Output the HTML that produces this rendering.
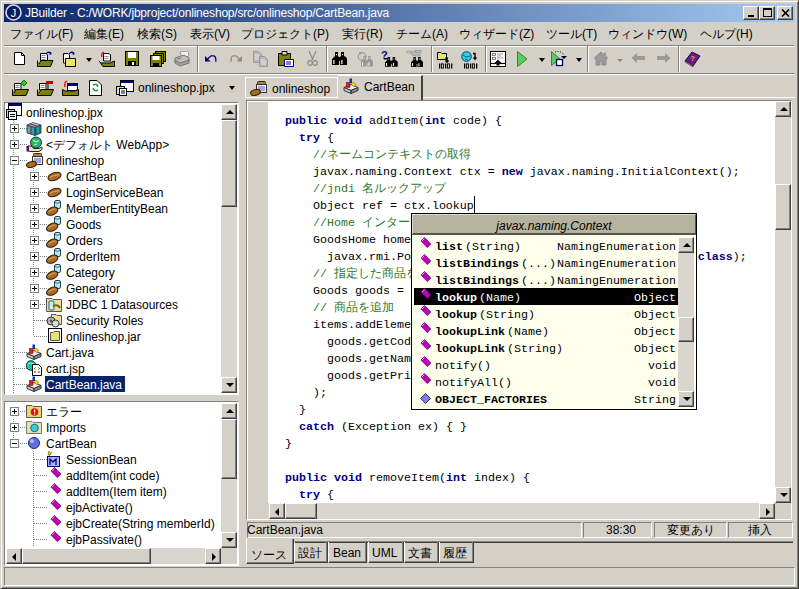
<!DOCTYPE html>
<html><head><meta charset="utf-8">
<style>
*{margin:0;padding:0;box-sizing:border-box}
html,body{width:799px;height:589px;overflow:hidden;background:#d4d0c8}
body{position:relative;font-family:"Liberation Sans",sans-serif;font-size:12px;color:#000}
.a{position:absolute}
.t{position:absolute;white-space:pre;line-height:16px;letter-spacing:0px}
.sunk{border-top:1px solid #808080;border-left:1px solid #808080;border-right:1px solid #fff;border-bottom:1px solid #fff}
.btn{position:absolute;background:#d4d0c8;border-top:1px solid #fff;border-left:1px solid #fff;border-right:1px solid #404040;border-bottom:1px solid #404040;box-shadow:inset -1px -1px 0 #808080}
.trk{position:absolute;background:#d9d6d0}
.code{position:absolute;font-family:"Liberation Mono",monospace;font-size:11.67px;line-height:17px;white-space:pre;color:#000}
.k{color:#000080;font-weight:bold}
.c{color:#2a7a2a}
.hsep{position:absolute;height:2px;border-top:1px solid #808080;border-bottom:1px solid #fff}
.vsep{position:absolute;width:2px;border-left:1px solid #808080;border-right:1px solid #fff}
.ic{position:absolute}
.ar{position:absolute;width:0;height:0;border-left:3px solid transparent;border-right:3px solid transparent}
.up{border-bottom:4px solid #000}
.dn{border-top:4px solid #000}
.box{position:absolute;width:9px;height:9px;border:1px solid #808080;background:#fff}
.box:before{content:"";position:absolute;left:1px;top:3px;width:5px;height:1px;background:#000}
.plus:after{content:"";position:absolute;left:3px;top:1px;width:1px;height:5px;background:#000}
.dv{position:absolute;width:1px;background-image:linear-gradient(#808080 50%,transparent 50%);background-size:1px 2px}
.dh{position:absolute;height:1px;background-image:linear-gradient(to right,#808080 50%,transparent 50%);background-size:2px 1px}
.j{display:inline-block;width:12px;text-align:center;font-family:"Liberation Sans",sans-serif;font-size:12px;font-weight:normal;line-height:12px}
</style></head><body>
<svg width="0" height="0" style="position:absolute"><defs>
<g id="bino"><path d="M3 0 H6 V4 L7 5 V13 H0 V7 L2 5 L3 4Z M9 0 H12 V4 L14 5 L15 7 V13 H8 V5 L9 4Z M6 5 H9 V9 H6Z" fill="currentColor"/><rect x="1.3" y="8" width="1.2" height="4" fill="#fff"/><rect x="9.3" y="8" width="1.2" height="4" fill="#fff"/><rect x="4" y="2" width="1" height="1.2" fill="#fff"/><rect x="10" y="2" width="1" height="1.2" fill="#fff"/></g>
</defs></svg>
<!-- window frame -->
<div class="a" style="left:0;top:0;width:799px;height:589px;border-top:1px solid #d4d0c8;border-left:1px solid #d4d0c8;border-right:1px solid #404040;border-bottom:1px solid #404040;box-shadow:inset 1px 1px 0 #fff,inset -1px -1px 0 #808080"></div>
<!-- title bar -->
<div class="a" style="left:4px;top:4px;width:791px;height:18px;background:linear-gradient(to right,#0a246a,#a6caf0)"></div>
<svg class="ic" style="left:5px;top:4px" width="17" height="17" viewBox="0 0 17 17"><circle cx="8.5" cy="8.5" r="7.5" fill="#0c1a5a" stroke="#d8dcec" stroke-width="1.6"/><text x="8.5" y="13" font-family="Liberation Sans" font-size="11" fill="#fff" text-anchor="middle">J</text></svg>
<div class="t" style="left:25px;top:5px;color:#fff;font-size:12px;letter-spacing:-0.19px">JBuilder - C:/WORK/jbproject/onlineshop/src/onlineshop/CartBean.java</div>
<div class="btn" style="left:743px;top:6px;width:16px;height:14px"><div class="a" style="left:4px;top:8px;width:6px;height:2px;background:#000"></div></div>
<div class="btn" style="left:759px;top:6px;width:16px;height:14px"><div class="a" style="left:3px;top:1px;width:9px;height:9px;border:1px solid #000;border-top-width:2px"></div></div>
<div class="btn" style="left:777px;top:6px;width:16px;height:14px"><svg class="ic" style="left:3px;top:2px" width="9" height="8"><path d="M1 0.5 L8 7.5 M8 0.5 L1 7.5" stroke="#000" stroke-width="1.6"/></svg></div>

<!-- menu -->
<div class="t" style="left:10px;top:26px"><span class="j">フ</span><span class="j">ァ</span><span class="j">イ</span><span class="j">ル</span>(F)</div>
<div class="t" style="left:84px;top:26px"><span class="j">編</span><span class="j">集</span>(E)</div>
<div class="t" style="left:137px;top:26px"><span class="j">検</span><span class="j">索</span>(S)</div>
<div class="t" style="left:190px;top:26px"><span class="j">表</span><span class="j">示</span>(V)</div>
<div class="t" style="left:241px;top:26px"><span class="j">プ</span><span class="j">ロ</span><span class="j">ジ</span><span class="j">ェ</span><span class="j">ク</span><span class="j">ト</span>(P)</div>
<div class="t" style="left:342px;top:26px"><span class="j">実</span><span class="j">行</span>(R)</div>
<div class="t" style="left:396px;top:26px"><span class="j">チ</span><span class="j">ー</span><span class="j">ム</span>(A)</div>
<div class="t" style="left:459px;top:26px"><span class="j">ウ</span><span class="j">ィ</span><span class="j">ザ</span><span class="j">ー</span><span class="j">ド</span>(Z)</div>
<div class="t" style="left:546px;top:26px"><span class="j">ツ</span><span class="j">ー</span><span class="j">ル</span>(T)</div>
<div class="t" style="left:608px;top:26px"><span class="j">ウ</span><span class="j">ィ</span><span class="j">ン</span><span class="j">ド</span><span class="j">ウ</span>(W)</div>
<div class="t" style="left:700px;top:26px"><span class="j">ヘ</span><span class="j">ル</span><span class="j">プ</span>(H)</div>

<div class="hsep" style="left:4px;top:45px;width:790px"></div>
<div class="hsep" style="left:4px;top:73px;width:790px"></div>

<!-- toolbar 1 -->
<svg class="ic" style="left:13px;top:52px" width="16" height="16"><path d="M1.5 0.5 H8.5 L11.5 3.5 V12.5 H1.5 Z" fill="#fff" stroke="#000"/><path d="M8.5 0.5 V3.5 H11.5" fill="none" stroke="#000"/></svg>
<svg class="ic" style="left:37px;top:51px" width="17" height="16"><path d="M3.5 2.5 H9 L10.5 4 V10 H3.5Z" fill="#fff" stroke="#000"/><path d="M4.5 4.5h4M4.5 6.5h4M4.5 8.5h4" stroke="#888"/><path d="M0.5 9.5 V15.5 H13.5 L16 9.5 H4 L2 13" fill="#808000" stroke="#000"/><path d="M9 3 Q11 0 14 2" fill="none" stroke="#00008b" stroke-width="1.3"/><path d="M13 1 L15 3 L12.5 4Z" fill="#00008b"/></svg>
<svg class="ic" style="left:62px;top:51px" width="16" height="16"><path d="M1.5 2.5 H6 L7.5 4 V12 H1.5Z" fill="#fff" stroke="#000"/><path d="M3.5 7.5 H13.5 V15.5 H3.5Z" fill="#e8e46c" stroke="#000"/><path d="M7 3 Q9 0 12 2" fill="none" stroke="#00008b" stroke-width="1.3"/><path d="M11 1 L13 3 L10.5 4Z" fill="#00008b"/></svg>
<div class="ar dn" style="left:86px;top:58px"></div>
<svg class="ic" style="left:99px;top:51px" width="16" height="16"><path d="M4.5 2.5 H10 L11.5 4 V10 H4.5Z" fill="#fff" stroke="#000"/><path d="M5.5 5.5h4M5.5 7.5h4" stroke="#888"/><path d="M0.5 10.5 L4 15.5 H15.5 V10 L11 12 H2Z" fill="#808000" stroke="#000"/><path d="M3 6 Q2 2 5 1" fill="none" stroke="#e00" stroke-width="1.3"/></svg>
<svg class="ic" style="left:125px;top:51px" width="15" height="16"><rect x="0.5" y="0.5" width="13" height="14" fill="#808000" stroke="#000"/><rect x="3" y="1" width="8" height="6" fill="#fff"/><rect x="3" y="10" width="8" height="5" fill="#000"/><rect x="7" y="11" width="2" height="3" fill="#fff"/></svg>
<svg class="ic" style="left:150px;top:51px" width="16" height="16"><rect x="5.5" y="0.5" width="10" height="10" fill="#808000" stroke="#000"/><rect x="3.5" y="2.5" width="10" height="10" fill="#808000" stroke="#000"/><rect x="0.5" y="4.5" width="11" height="11" fill="#808000" stroke="#000"/><rect x="2.5" y="5" width="7" height="4" fill="#fff"/><rect x="3" y="12" width="6" height="4" fill="#000"/></svg>
<svg class="ic" style="left:174px;top:51px" width="16" height="16"><path d="M6 1 L14 0 L15 5 L8 7Z" fill="#f4f4f4" stroke="#999"/><path d="M1 7 L10 4 L15 7 V11 L6 14 L1 11Z" fill="#c0c0c0" stroke="#777"/><path d="M1 9 L6 12 L15 9 V12 L6 15 L1 12Z" fill="#a0a0a0" stroke="#777"/><path d="M3 8 L7 7" stroke="#c44"/></svg>
<div class="vsep" style="left:197px;top:46px;height:26px"></div>
<svg class="ic" style="left:204px;top:51px" width="16" height="16"><path d="M1 5 V10.5 H6.5Z" fill="#000070"/><path d="M3.5 8 L7 4.8 H10 Q12.2 5.5 11.8 10.8" fill="none" stroke="#000070" stroke-width="1.3"/></svg>
<svg class="ic" style="left:228px;top:51px" width="16" height="16"><path d="M14 5 V10.5 H8.5Z" fill="#8a8a8a"/><path d="M11.5 8 L8 4.8 H5 Q2.8 5.5 3.2 10.8" fill="none" stroke="#8a8a8a" stroke-width="1.3"/></svg>
<svg class="ic" style="left:253px;top:51px" width="16" height="16"><path d="M0.5 0.5 H5.5 L8.5 3.5 V11.5 H0.5Z" fill="#b8b8b8" stroke="#9a9a9a"/><path d="M2 4h4M2 6h5M2 8h5" stroke="#e8e8e8"/><path d="M6.5 5.5 H11.5 L14.5 8.5 V15.5 H6.5Z" fill="#b8b8b8" stroke="#9a9a9a"/><path d="M8 9h4M8 11h5M8 13h5" stroke="#e8e8e8"/></svg>
<svg class="ic" style="left:278px;top:51px" width="16" height="17"><path d="M0.5 2.5 H12.5 V14.5 H0.5Z" fill="#808000" stroke="#000"/><path d="M4 0.5 H9 V4 H4Z" fill="#ddd" stroke="#000"/><path d="M6.5 8.5 H15.5 V15.5 H6.5Z" fill="#fff" stroke="#00008b"/><path d="M8 11h5M8 13h5" stroke="#00008b"/></svg>
<svg class="ic" style="left:307px;top:51px" width="11" height="16"><path d="M2 0 L6 9 M9 0 L5 9" stroke="#8c8c8c" stroke-width="1.2"/><circle cx="3" cy="12" r="2.3" fill="none" stroke="#8c8c8c" stroke-width="1.2"/><circle cx="8" cy="12" r="2.3" fill="none" stroke="#8c8c8c" stroke-width="1.2"/></svg>
<div class="vsep" style="left:326px;top:46px;height:26px"></div>
<svg class="ic" style="left:332px;top:52px;color:#000" width="16" height="14"><use href="#bino"/></svg>
<svg class="ic" style="left:356px;top:51px;color:#999" width="18" height="16"><circle cx="6" cy="5.5" r="3.8" fill="none" stroke="#999" stroke-width="1.2"/><path d="M3 1 L6 1.5 L4 4Z" fill="#999"/><g transform="translate(5 5) scale(0.8)"><use href="#bino"/></g></svg>
<svg class="ic" style="left:380px;top:50px;color:#000" width="19" height="17"><text x="1" y="9" font-family="Liberation Sans" font-weight="bold" font-size="11" fill="#000090">?</text><rect x="4" y="8" width="5" height="1.5" fill="#000"/><g transform="translate(5 7) scale(0.85 0.75)"><use href="#bino"/></g></svg>
<svg class="ic" style="left:406px;top:50px;color:#000" width="18" height="17"><rect x="1" y="1" width="4" height="2" fill="#d8d8a0" stroke="#888" stroke-width="0.6"/><rect x="9" y="0.5" width="6" height="2" fill="#a0d0d0" stroke="#888" stroke-width="0.6"/><rect x="8" y="4" width="6" height="2" fill="#a0d0d0" stroke="#888" stroke-width="0.6"/><path d="M5 2 H9 M6 2 V5 H8" stroke="#889" fill="none" stroke-width="0.8"/><g transform="translate(5 7) scale(0.8 0.77)"><use href="#bino"/></g></svg>
<div class="vsep" style="left:431px;top:46px;height:26px"></div>
<svg class="ic" style="left:436px;top:51px" width="18" height="18"><path d="M1.5 1.5 H5 L6 2.5 H10.5 V8.5 H1.5Z" fill="#e8e47c" stroke="#000"/><path d="M11 6 V11 M9.5 9.5 L11 11.2 L12.5 9.5" stroke="#000" stroke-width="1.4" fill="none"/><path d="M9 7 H11" stroke="#000"/><rect x="3.0" y="12.5" width="1.3" height="5" fill="#000"/><rect x="5.5" y="12.9" width="2" height="4.2" fill="none" stroke="#000" stroke-width="0.9"/><rect x="9.0" y="12.5" width="1.3" height="5" fill="#000"/><rect x="11.5" y="12.9" width="2" height="4.2" fill="none" stroke="#000" stroke-width="0.9"/><rect x="15.0" y="12.5" width="1.3" height="5" fill="#000"/></svg>
<svg class="ic" style="left:461px;top:51px" width="18" height="18"><circle cx="5.5" cy="5.5" r="4.8" fill="#30d0f0" stroke="#004060"/><path d="M2 4 L5 6 L9 5 M4 8 L7 9" stroke="#006080" fill="none"/><path d="M12 2.5 H14 V8 M12.5 6.5 L14 8.2 L15.5 6.5" stroke="#000" stroke-width="1.4" fill="none"/><rect x="3.0" y="12.5" width="1.3" height="5" fill="#000"/><rect x="5.5" y="12.9" width="2" height="4.2" fill="none" stroke="#000" stroke-width="0.9"/><rect x="9.0" y="12.5" width="1.3" height="5" fill="#000"/><rect x="11.5" y="12.9" width="2" height="4.2" fill="none" stroke="#000" stroke-width="0.9"/><rect x="15.0" y="12.5" width="1.3" height="5" fill="#000"/></svg>
<div class="vsep" style="left:485px;top:46px;height:26px"></div>
<svg class="ic" style="left:490px;top:51px" width="16" height="17"><rect x="0.5" y="0.5" width="15" height="15" fill="#fff" stroke="#000"/><rect x="2.5" y="2.5" width="3" height="2" fill="none" stroke="#666" stroke-width="0.8"/><rect x="2.5" y="6.5" width="3" height="2" fill="none" stroke="#666" stroke-width="0.8"/><path d="M7 3h6M7 7h6M7 5h4" stroke="#999"/><path d="M1 12.5 H15" stroke="#000" stroke-width="1.2"/><path d="M8 8.5 L11.5 12 H9.5 V14.5 H6.5 V12 H4.5Z" fill="#000"/></svg>
<svg class="ic" style="left:517px;top:51px" width="11" height="16"><path d="M0.5 0.5 L10 8 L0.5 15.5Z" fill="#5ccc5c" stroke="#2a8a2a"/></svg>
<div class="ar dn" style="left:539px;top:58px"></div>
<svg class="ic" style="left:551px;top:51px" width="17" height="16"><path d="M0.5 0.5 L9 8 L0.5 14.5Z" fill="#5ccc5c" stroke="#2a8a2a"/><path d="M4 1 Q10 -1 13 4" fill="none" stroke="#000" stroke-dasharray="1 1.5"/><path d="M10 5 H16 L13 8Z" fill="#000"/><rect x="5.5" y="8.5" width="6" height="6" fill="#fff" stroke="#00006a" stroke-width="1.3"/></svg>
<div class="ar dn" style="left:576px;top:58px"></div>
<div class="vsep" style="left:587px;top:46px;height:26px"></div>
<svg class="ic" style="left:594px;top:51px" width="14" height="15"><path d="M7 1 L0.5 7 H2 V14 H6 V10 H8 V14 H12 V7 H13.5Z" fill="#9a9a9a" stroke="#888"/><rect x="10" y="1.5" width="2" height="4" fill="#9a9a9a"/></svg>
<div class="ar" style="left:617px;top:59px;border-top:3px solid #888"></div>
<svg class="ic" style="left:631px;top:52px" width="15" height="12"><path d="M0.5 6 L6 1 V4 H14 V8 H6 V11Z" fill="#9a9a9a"/></svg>
<svg class="ic" style="left:656px;top:52px" width="15" height="12"><path d="M14.5 6 L9 1 V4 H1 V8 H9 V11Z" fill="#9a9a9a"/></svg>
<div class="vsep" style="left:678px;top:46px;height:26px"></div>
<svg class="ic" style="left:684px;top:51px" width="17" height="16"><path d="M1 10 L8 1 L16 5 L9 15Z" fill="#6a1a8a" stroke="#2a0040"/><path d="M1 10 L9 15 L9 16 L1 11Z" fill="#fff" stroke="#2a0040" stroke-width="0.6"/><text x="6.5" y="10" font-family="Liberation Sans" font-weight="bold" font-size="7" fill="#f0c000">?</text></svg>

<!-- toolbar 2 -->
<svg class="ic" style="left:12px;top:80px" width="17" height="16"><path d="M2.5 3.5 H9 V10 H2.5Z" fill="#fff" stroke="#000"/><path d="M3.5 5.5h4M3.5 7.5h4" stroke="#888"/><path d="M0.5 9.5 V15.5 H14 L16.5 9.5 H4 L2 13" fill="#808000" stroke="#000"/><path d="M12 0 L15 3 L12 6 L9 3Z" fill="#20d020" stroke="#080"/></svg>
<svg class="ic" style="left:37px;top:80px" width="17" height="16"><path d="M2.5 3.5 H9 V10 H2.5Z" fill="#fff" stroke="#000"/><path d="M3.5 5.5h4M3.5 7.5h4" stroke="#888"/><path d="M0.5 9.5 V15.5 H14 L16.5 9.5 H4 L2 13" fill="#808000" stroke="#000"/><rect x="9" y="1" width="7" height="3" fill="#c00000"/><path d="M11 4 V9" stroke="#000"/></svg>
<svg class="ic" style="left:62px;top:80px" width="17" height="16"><rect x="5.5" y="3.5" width="10" height="7" fill="#fff" stroke="#000"/><rect x="6" y="4" width="9" height="2" fill="#00008b"/><path d="M0.5 9.5 V15.5 H16.5 V9.5 L12 11 H3Z" fill="#808000" stroke="#000"/><path d="M3 7 Q2 2 5 1" fill="none" stroke="#e00" stroke-width="1.3"/></svg>
<svg class="ic" style="left:89px;top:80px" width="13" height="16"><path d="M0.5 0.5 H8 L12.5 5 V15.5 H0.5Z" fill="#fff" stroke="#000"/><path d="M4 5 Q8 3 9 7 M9 10 Q5 12 4 8" fill="none" stroke="#1a9a1a" stroke-width="1.4"/></svg>
<svg class="ic" style="left:116px;top:80px" width="18" height="16"><rect x="4.5" y="0.5" width="13" height="11" fill="#fff" stroke="#000"/><rect x="5" y="1" width="12" height="2" fill="#00008b"/><rect x="0.5" y="6.5" width="8" height="8" fill="#d8d8c8" stroke="#000"/><rect x="3.5" y="8.5" width="7" height="7" fill="#fff" stroke="#000"/><path d="M5 11h4M5 13h4" stroke="#000"/></svg>
<div class="t" style="left:138px;top:80px">onlineshop.jpx</div>
<div class="ar dn" style="left:229px;top:86px"></div>
<!-- file tabs -->
<div class="a" style="left:245px;top:77px;width:93px;height:21px;border-top:1px solid #fff;border-left:1px solid #fff;border-right:1px solid #fff;border-bottom:1px solid #fff"></div>
<div class="a" style="left:422px;top:97px;width:373px;height:1px;background:#fff"></div>
<svg class="ic" style="left:250px;top:80px" width="17" height="16"><rect x="7.5" y="1.5" width="8" height="3" rx="1" fill="#b08040" stroke="#3a2a10"/><rect x="6.5" y="4.5" width="10" height="8" fill="#f0f0f0" stroke="#333"/><rect x="8" y="6" width="7" height="5" fill="#a8a8d8"/><ellipse cx="5.5" cy="12.5" rx="5" ry="2.8" transform="rotate(-15 5.5 12.5)" fill="#a86a28" stroke="#3a2000"/></svg>
<div class="t" style="left:272px;top:81px">onlineshop</div>
<div class="a" style="left:338px;top:75px;width:85px;height:25px;background:#d4d0c8;border-top:1px solid #fff;border-right:2px solid #404040"></div>
<svg class="ic" style="left:343px;top:78px" width="17" height="16"><path d="M1 9.5 L8 6.5 L15 9.5 L8 12.5Z" fill="#f4f4f4" stroke="#222" stroke-width="0.9"/><path d="M1 9.5 L8 12.5 V15.5 L1 12.5Z" fill="#c8c8c8" stroke="#222" stroke-width="0.9"/><path d="M8 12.5 L15 9.5 V12.5 L8 15.5Z" fill="#909090" stroke="#222" stroke-width="0.9"/><rect x="3.5" y="4.5" width="3.5" height="5" fill="#e01818" stroke="#600" stroke-width="0.5"/><rect x="6.5" y="0.5" width="2.5" height="4.5" fill="#1030b0"/><path d="M8 6 L10.5 4 L13 6.5 L10.5 8.5Z" fill="#f0d800" stroke="#806000" stroke-width="0.5"/></svg>
<div class="t" style="left:364px;top:79px">CartBean</div>

<!-- left tree panel -->
<div class="a sunk" style="left:4px;top:102px;width:235px;height:293px;background:#fff"></div>
<!-- tree scrollbar -->
<div class="trk" style="left:221px;top:104px;width:16px;height:289px"></div>
<div class="btn" style="left:221px;top:104px;width:16px;height:16px"><div class="ar up" style="left:4px;top:5px;border-left-width:4px;border-right-width:4px"></div></div>
<div class="btn" style="left:221px;top:120px;width:16px;height:87px"></div>
<div class="btn" style="left:221px;top:377px;width:16px;height:16px"><div class="ar dn" style="left:4px;top:5px;border-left-width:4px;border-right-width:4px"></div></div>

<!-- tree lines -->
<div class="dv" style="left:13px;top:120px;height:273px"></div>
<div class="dv" style="left:33px;top:168px;height:168px"></div>
<div class="dh" style="left:20px;top:128px;width:8px"></div>
<div class="dh" style="left:20px;top:144px;width:8px"></div>
<div class="dh" style="left:20px;top:160px;width:8px"></div>
<div class="dh" style="left:14px;top:352px;width:13px"></div>
<div class="dh" style="left:14px;top:368px;width:13px"></div>
<div class="dh" style="left:14px;top:384px;width:13px"></div>
<div class="dh" style="left:40px;top:176px;width:8px"></div>
<div class="dh" style="left:40px;top:192px;width:8px"></div>
<div class="dh" style="left:40px;top:208px;width:8px"></div>
<div class="dh" style="left:40px;top:224px;width:8px"></div>
<div class="dh" style="left:40px;top:240px;width:8px"></div>
<div class="dh" style="left:40px;top:256px;width:8px"></div>
<div class="dh" style="left:40px;top:272px;width:8px"></div>
<div class="dh" style="left:40px;top:288px;width:8px"></div>
<div class="dh" style="left:40px;top:304px;width:8px"></div>
<div class="dh" style="left:34px;top:320px;width:13px"></div>
<div class="dh" style="left:34px;top:336px;width:13px"></div>
<div class="box plus" style="left:10px;top:124px"></div>
<div class="box plus" style="left:10px;top:140px"></div>
<div class="box" style="left:10px;top:156px"></div>
<div class="box plus" style="left:30px;top:172px"></div>
<div class="box plus" style="left:30px;top:188px"></div>
<div class="box plus" style="left:30px;top:204px"></div>
<div class="box plus" style="left:30px;top:220px"></div>
<div class="box plus" style="left:30px;top:236px"></div>
<div class="box plus" style="left:30px;top:252px"></div>
<div class="box plus" style="left:30px;top:268px"></div>
<div class="box plus" style="left:30px;top:284px"></div>
<div class="box plus" style="left:30px;top:300px"></div>

<!-- tree icons -->
<svg class="ic" style="left:6px;top:103px" width="17" height="17"><rect x="2.5" y="0.5" width="13" height="12" fill="#fff" stroke="#000"/><rect x="3" y="1" width="12" height="2" fill="#000080"/><rect x="0.5" y="6.5" width="8" height="8" fill="#c8c8c0" stroke="#000"/><rect x="2.5" y="8.5" width="8" height="8" fill="#fff" stroke="#000"/><path d="M4 11.5h5M4 13.5h5" stroke="#000"/></svg>
<svg class="ic" style="left:26px;top:121px" width="17" height="16"><path d="M1 4 L7 1.5 L15 4 L9 6.5Z" fill="#a8e8f0" stroke="#104050" stroke-width="0.8"/><path d="M1 4 L9 6.5 V14.5 L1 12Z" fill="#30a0b0" stroke="#104050" stroke-width="0.8"/><path d="M9 6.5 L15 4 V12 L9 14.5Z" fill="#207080" stroke="#104050" stroke-width="0.8"/><path d="M4 2.8 L12 5.3 M5 5 V13" stroke="#c02020" stroke-width="1.3"/><path d="M3 6 V12 M12 6 V12" stroke="#60d0e0" stroke-width="0.8"/></svg>
<svg class="ic" style="left:26px;top:136px" width="17" height="16"><circle cx="10" cy="6.5" r="5.5" fill="#30b070" stroke="#0a3a30"/><path d="M7 4 L10 6 L13 4.5 M8 9 L11 8" stroke="#a0f0c0" fill="none" stroke-width="1.2"/><path d="M2 10 H5 L8 12.5 H13 L16 11 V13.5 L13 15.5 H4 L2 14.5Z" fill="#e8e0b0" stroke="#2a2a20"/><rect x="0.5" y="10" width="2.5" height="5.5" fill="#600080"/></svg>
<svg class="ic" style="left:26px;top:152px" width="17" height="16"><rect x="7.5" y="1.5" width="8" height="3" rx="1" fill="#b08040" stroke="#3a2a10"/><rect x="6.5" y="4.5" width="10" height="8" fill="#f0f0f0" stroke="#333"/><rect x="8" y="6" width="7" height="5" fill="#a8a8d8"/><ellipse cx="5.5" cy="12.5" rx="5" ry="2.8" transform="rotate(-15 5.5 12.5)" fill="#a86a28" stroke="#3a2000"/></svg>
<svg class="ic" style="left:47px;top:168px" width="16" height="16"><ellipse cx="7.5" cy="8.5" rx="6.8" ry="3.8" transform="rotate(-20 7.5 8.5)" fill="#a86a28" stroke="#3a2000"/><path d="M3 9.5 Q7 6.5 12 7" stroke="#e0b070" fill="none"/></svg>
<svg class="ic" style="left:47px;top:184px" width="16" height="16"><ellipse cx="7.5" cy="8.5" rx="6.8" ry="3.8" transform="rotate(-20 7.5 8.5)" fill="#a86a28" stroke="#3a2000"/><path d="M3 9.5 Q7 6.5 12 7" stroke="#e0b070" fill="none"/></svg>
<svg class="ic" style="left:46px;top:200px" width="17" height="16"><rect x="8.5" y="0.5" width="6" height="8" rx="1.5" fill="#b8eaf4" stroke="#204858"/><path d="M8.5 2.5 Q11.5 4 14.5 2.5" stroke="#204858" fill="none" stroke-width="0.8"/><ellipse cx="6.2" cy="11.2" rx="6" ry="3.6" transform="rotate(-25 6.2 11.2)" fill="#a86a28" stroke="#3a2000"/><path d="M2.5 12 Q6 9 9.5 9" stroke="#e0b070" fill="none"/></svg>
<svg class="ic" style="left:46px;top:216px" width="17" height="16"><rect x="8.5" y="0.5" width="6" height="8" rx="1.5" fill="#b8eaf4" stroke="#204858"/><path d="M8.5 2.5 Q11.5 4 14.5 2.5" stroke="#204858" fill="none" stroke-width="0.8"/><ellipse cx="6.2" cy="11.2" rx="6" ry="3.6" transform="rotate(-25 6.2 11.2)" fill="#a86a28" stroke="#3a2000"/><path d="M2.5 12 Q6 9 9.5 9" stroke="#e0b070" fill="none"/></svg>
<svg class="ic" style="left:46px;top:232px" width="17" height="16"><rect x="8.5" y="0.5" width="6" height="8" rx="1.5" fill="#b8eaf4" stroke="#204858"/><path d="M8.5 2.5 Q11.5 4 14.5 2.5" stroke="#204858" fill="none" stroke-width="0.8"/><ellipse cx="6.2" cy="11.2" rx="6" ry="3.6" transform="rotate(-25 6.2 11.2)" fill="#a86a28" stroke="#3a2000"/><path d="M2.5 12 Q6 9 9.5 9" stroke="#e0b070" fill="none"/></svg>
<svg class="ic" style="left:46px;top:248px" width="17" height="16"><rect x="8.5" y="0.5" width="6" height="8" rx="1.5" fill="#b8eaf4" stroke="#204858"/><path d="M8.5 2.5 Q11.5 4 14.5 2.5" stroke="#204858" fill="none" stroke-width="0.8"/><ellipse cx="6.2" cy="11.2" rx="6" ry="3.6" transform="rotate(-25 6.2 11.2)" fill="#a86a28" stroke="#3a2000"/><path d="M2.5 12 Q6 9 9.5 9" stroke="#e0b070" fill="none"/></svg>
<svg class="ic" style="left:46px;top:264px" width="17" height="16"><rect x="8.5" y="0.5" width="6" height="8" rx="1.5" fill="#b8eaf4" stroke="#204858"/><path d="M8.5 2.5 Q11.5 4 14.5 2.5" stroke="#204858" fill="none" stroke-width="0.8"/><ellipse cx="6.2" cy="11.2" rx="6" ry="3.6" transform="rotate(-25 6.2 11.2)" fill="#a86a28" stroke="#3a2000"/><path d="M2.5 12 Q6 9 9.5 9" stroke="#e0b070" fill="none"/></svg>
<svg class="ic" style="left:46px;top:280px" width="17" height="16"><rect x="8.5" y="0.5" width="6" height="8" rx="1.5" fill="#b8eaf4" stroke="#204858"/><path d="M8.5 2.5 Q11.5 4 14.5 2.5" stroke="#204858" fill="none" stroke-width="0.8"/><ellipse cx="6.2" cy="11.2" rx="6" ry="3.6" transform="rotate(-25 6.2 11.2)" fill="#a86a28" stroke="#3a2000"/><path d="M2.5 12 Q6 9 9.5 9" stroke="#e0b070" fill="none"/></svg>
<svg class="ic" style="left:46px;top:296px" width="17" height="16"><path d="M0.5 2.5 H6 L7 3.5 H15.5 V15.5 H0.5Z" fill="#e8e0a0" stroke="#555"/><rect x="3" y="5" width="5" height="9" rx="1" fill="#c8f0f8" stroke="#306070"/><path d="M7 10 Q12 8 14 12" stroke="#806000" stroke-width="2" fill="none"/></svg>
<svg class="ic" style="left:46px;top:312px" width="17" height="16"><path d="M5.5 2.5 H10 L11 3.5 H15.5 V12.5 H5.5Z" fill="#e8e0a0" stroke="#555"/><circle cx="5" cy="9" r="4" fill="#bbb" stroke="#333"/><circle cx="9.5" cy="11.5" r="3.5" fill="#ddd" stroke="#333"/><circle cx="5" cy="9" r="1.4" fill="#555"/></svg>
<svg class="ic" style="left:46px;top:312px" width="0" height="0"></svg>
<svg class="ic" style="left:48px;top:328px" width="15" height="16"><rect x="0.5" y="0.5" width="13" height="14" fill="#fff" stroke="#000"/><path d="M2.5 4.5 H5 L6 3.5 H11.5 V12.5 H2.5Z" fill="#e8e070" stroke="#555"/></svg>
<svg class="ic" style="left:26px;top:344px" width="17" height="16"><path d="M1 9.5 L8 6.5 L15 9.5 L8 12.5Z" fill="#f4f4f4" stroke="#222" stroke-width="0.9"/><path d="M1 9.5 L8 12.5 V15.5 L1 12.5Z" fill="#c8c8c8" stroke="#222" stroke-width="0.9"/><path d="M8 12.5 L15 9.5 V12.5 L8 15.5Z" fill="#909090" stroke="#222" stroke-width="0.9"/><rect x="3.5" y="4.5" width="3.5" height="5" fill="#e01818" stroke="#600" stroke-width="0.5"/><rect x="6.5" y="0.5" width="2.5" height="4.5" fill="#1030b0"/><path d="M8 6 L10.5 4 L13 6.5 L10.5 8.5Z" fill="#f0d800" stroke="#806000" stroke-width="0.5"/></svg>
<svg class="ic" style="left:26px;top:360px" width="17" height="16"><circle cx="5" cy="5.5" r="4.8" fill="#20c0a0" stroke="#0a3a40"/><path d="M2 4 Q5 2 8 4" stroke="#a0f0e0" fill="none"/><path d="M6.5 4.5 H12.5 L15.5 7.5 V15.5 H6.5Z" fill="#fff" stroke="#000"/><path d="M9.5 7.5 L8.5 8.5 L9.5 9.5 M12.5 7.5 L13.5 8.5 L12.5 9.5 M9.5 11 L8.5 12 L9.5 13 M12.5 11 L13.5 12 L12.5 13" stroke="#000" fill="none" stroke-width="0.8"/></svg>
<svg class="ic" style="left:26px;top:376px" width="17" height="16"><path d="M1 9.5 L8 6.5 L15 9.5 L8 12.5Z" fill="#f4f4f4" stroke="#222" stroke-width="0.9"/><path d="M1 9.5 L8 12.5 V15.5 L1 12.5Z" fill="#c8c8c8" stroke="#222" stroke-width="0.9"/><path d="M8 12.5 L15 9.5 V12.5 L8 15.5Z" fill="#909090" stroke="#222" stroke-width="0.9"/><rect x="3.5" y="4.5" width="3.5" height="5" fill="#e01818" stroke="#600" stroke-width="0.5"/><rect x="6.5" y="0.5" width="2.5" height="4.5" fill="#1030b0"/><path d="M8 6 L10.5 4 L13 6.5 L10.5 8.5Z" fill="#f0d800" stroke="#806000" stroke-width="0.5"/></svg>

<!-- tree texts -->
<div class="t" style="left:26px;top:105px">onlineshop.jpx</div>
<div class="t" style="left:46px;top:121px">onlineshop</div>
<div class="t" style="left:46px;top:137px">&lt;<span class="j">デ</span><span class="j">フ</span><span class="j">ォ</span><span class="j">ル</span><span class="j">ト</span> WebApp&gt;</div>
<div class="t" style="left:46px;top:153px">onlineshop</div>
<div class="t" style="left:66px;top:169px">CartBean</div>
<div class="t" style="left:66px;top:185px">LoginServiceBean</div>
<div class="t" style="left:66px;top:201px">MemberEntityBean</div>
<div class="t" style="left:66px;top:217px">Goods</div>
<div class="t" style="left:66px;top:233px">Orders</div>
<div class="t" style="left:66px;top:249px">OrderItem</div>
<div class="t" style="left:66px;top:265px">Category</div>
<div class="t" style="left:66px;top:281px">Generator</div>
<div class="t" style="left:66px;top:297px">JDBC 1 Datasources</div>
<div class="t" style="left:66px;top:313px">Security Roles</div>
<div class="t" style="left:66px;top:329px">onlineshop.jar</div>
<div class="t" style="left:46px;top:345px">Cart.java</div>
<div class="t" style="left:46px;top:361px">cart.jsp</div>
<div class="a" style="left:45px;top:376px;width:80px;height:16px;background:#0a246a"></div>
<div class="t" style="left:46px;top:377px;color:#fff">CartBean.java</div>
<!-- structure panel -->
<div class="a sunk" style="left:4px;top:401px;width:235px;height:165px;background:#fff"></div>
<div class="trk" style="left:221px;top:403px;width:16px;height:145px"></div>
<div class="btn" style="left:221px;top:403px;width:16px;height:16px"><div class="ar up" style="left:4px;top:5px;border-left-width:4px;border-right-width:4px"></div></div>
<div class="btn" style="left:221px;top:419px;width:16px;height:60px"></div>
<div class="btn" style="left:221px;top:532px;width:16px;height:16px"><div class="ar dn" style="left:4px;top:5px;border-left-width:4px;border-right-width:4px"></div></div>
<div class="trk" style="left:6px;top:548px;width:215px;height:16px"></div>
<div class="a" style="left:221px;top:548px;width:16px;height:16px;background:#d4d0c8"></div>
<div class="btn" style="left:6px;top:548px;width:16px;height:16px"><div class="ar" style="left:5px;top:4px;border-top:4px solid transparent;border-bottom:4px solid transparent;border-right:4px solid #000;border-left:0"></div></div>
<div class="btn" style="left:22px;top:548px;width:129px;height:16px"></div>
<div class="btn" style="left:205px;top:548px;width:16px;height:16px"><div class="ar" style="left:6px;top:4px;border-top:4px solid transparent;border-bottom:4px solid transparent;border-left:4px solid #000;border-right:0"></div></div>

<div class="dv" style="left:13px;top:419px;height:20px"></div>
<div class="dv" style="left:33px;top:451px;height:95px"></div>
<div class="dh" style="left:20px;top:411px;width:8px"></div>
<div class="dh" style="left:20px;top:427px;width:8px"></div>
<div class="dh" style="left:20px;top:443px;width:8px"></div>
<div class="dh" style="left:34px;top:459px;width:13px"></div>
<div class="dh" style="left:34px;top:475px;width:14px"></div>
<div class="dh" style="left:34px;top:491px;width:14px"></div>
<div class="dh" style="left:34px;top:507px;width:14px"></div>
<div class="dh" style="left:34px;top:523px;width:14px"></div>
<div class="dh" style="left:34px;top:539px;width:14px"></div>
<div class="box plus" style="left:10px;top:407px"></div>
<div class="box plus" style="left:10px;top:423px"></div>
<div class="box" style="left:10px;top:439px"></div>
<svg class="ic" style="left:26px;top:403px" width="17" height="16"><path d="M0.5 2.5 H6 L7 3.5 H15.5 V14.5 H0.5Z" fill="#e8d870" stroke="#555"/><circle cx="8.5" cy="9" r="3.8" fill="#e01010"/><rect x="8" y="6.5" width="1.2" height="3" fill="#fff"/><rect x="8" y="10.5" width="1.2" height="1.2" fill="#fff"/></svg>
<svg class="ic" style="left:26px;top:419px" width="17" height="16"><path d="M0.5 2.5 H6 L7 3.5 H15.5 V14.5 H0.5Z" fill="#e8e0a8" stroke="#777"/><circle cx="8.5" cy="9" r="3.8" fill="#40c8d8" stroke="#207080"/></svg>
<svg class="ic" style="left:27px;top:436px" width="14" height="14"><circle cx="7" cy="7" r="5.5" fill="#6070e0" stroke="#202880"/><circle cx="5" cy="5" r="2" fill="#b0b8ff"/></svg>
<svg class="ic" style="left:47px;top:451px" width="16" height="16"><rect x="0.5" y="5.5" width="12" height="10" fill="#a8b8f0" stroke="#000080"/><path d="M3 14 V8 L6 11 L9 8 V14" stroke="#000080" fill="none" stroke-width="1.3"/><path d="M2 0 L4 3 L1 4Z M5 1 L2 5" fill="#f0d000" stroke="#b09000"/></svg>
<svg class="ic" style="left:49px;top:466px" width="13" height="13"><path d="M5.5 1.5 L11.8 8 L8.3 11.6 L2 5.1Z" fill="#c000c0" stroke="#700070" stroke-width="0.8"/><path d="M3 5 L5.5 2.5" stroke="#f0a0f0"/></svg>
<svg class="ic" style="left:49px;top:482px" width="13" height="13"><path d="M5.5 1.5 L11.8 8 L8.3 11.6 L2 5.1Z" fill="#c000c0" stroke="#700070" stroke-width="0.8"/><path d="M3 5 L5.5 2.5" stroke="#f0a0f0"/></svg>
<svg class="ic" style="left:49px;top:498px" width="13" height="13"><path d="M5.5 1.5 L11.8 8 L8.3 11.6 L2 5.1Z" fill="#c000c0" stroke="#700070" stroke-width="0.8"/><path d="M3 5 L5.5 2.5" stroke="#f0a0f0"/></svg>
<svg class="ic" style="left:49px;top:514px" width="13" height="13"><path d="M5.5 1.5 L11.8 8 L8.3 11.6 L2 5.1Z" fill="#c000c0" stroke="#700070" stroke-width="0.8"/><path d="M3 5 L5.5 2.5" stroke="#f0a0f0"/></svg>
<svg class="ic" style="left:49px;top:530px" width="13" height="13"><path d="M5.5 1.5 L11.8 8 L8.3 11.6 L2 5.1Z" fill="#c000c0" stroke="#700070" stroke-width="0.8"/><path d="M3 5 L5.5 2.5" stroke="#f0a0f0"/></svg>
<div class="t" style="left:46px;top:404px"><span class="j">エ</span><span class="j">ラ</span><span class="j">ー</span></div>
<div class="t" style="left:46px;top:420px">Imports</div>
<div class="t" style="left:46px;top:436px">CartBean</div>
<div class="t" style="left:66px;top:452px">SessionBean</div>
<div class="t" style="left:66px;top:468px">addItem(int code)</div>
<div class="t" style="left:66px;top:484px">addItem(Item item)</div>
<div class="t" style="left:66px;top:500px">ejbActivate()</div>
<div class="t" style="left:66px;top:516px">ejbCreate(String memberId)</div>
<div class="t" style="left:66px;top:532px">ejbPassivate()</div>

<!-- editor -->
<div class="a" style="left:246px;top:100px;width:546px;height:420px;border-top:1px solid #808080;border-left:1px solid #808080;border-right:1px solid #fff;border-bottom:1px solid #fff"></div>
<div class="a" style="left:247px;top:101px;width:544px;height:418px;background:#fff"></div>
<div class="a" style="left:248px;top:102px;width:20px;height:417px;background:#d4d0c8"></div>
<div class="code" style="left:271px;top:113px">  <span class="k">public</span> <span class="k">void</span> addItem(<span class="k">int</span> code) {
    <span class="k">try</span> {
      <span class="c">//<span class="j">ネ</span><span class="j">ー</span><span class="j">ム</span><span class="j">コ</span><span class="j">ン</span><span class="j">テ</span><span class="j">キ</span><span class="j">ス</span><span class="j">ト</span><span class="j">の</span><span class="j">取</span><span class="j">得</span></span>
      javax.naming.Context ctx = <span class="k">new</span> javax.naming.InitialContext();
      <span class="c">//jndi <span class="j">名</span><span class="j">ル</span><span class="j">ッ</span><span class="j">ク</span><span class="j">ア</span><span class="j">ッ</span><span class="j">プ</span></span>
      Object ref = ctx.lookup
      <span class="c">//Home <span class="j">イ</span><span class="j">ン</span><span class="j">タ</span><span class="j">ー</span><span class="j">フ</span><span class="j">ェ</span><span class="j">ー</span><span class="j">ス</span><span class="j">の</span><span class="j">取</span><span class="j">得</span></span>
      GoodsHome home = (GoodsHome)
        javax.rmi.PortableRemoteObject.narrow(ref, GoodsHome.<span class="k">class</span>);
      <span class="c">// <span class="j">指</span><span class="j">定</span><span class="j">し</span><span class="j">た</span><span class="j">商</span><span class="j">品</span><span class="j">を</span><span class="j">取</span><span class="j">得</span></span>
      Goods goods = home.findByPrimaryKey(code);
      <span class="c">// <span class="j">商</span><span class="j">品</span><span class="j">を</span><span class="j">追</span><span class="j">加</span></span>
      items.addElement(new Item(
        goods.getCode(),
        goods.getName(),
        goods.getPrice()
      );
    }
    <span class="k">catch</span> (Exception ex) { }
  }

  <span class="k">public</span> <span class="k">void</span> removeItem(<span class="k">int</span> index) {
    <span class="k">try</span> {</div>
<div class="a" style="left:474px;top:196px;width:1px;height:17px;background:#000"></div>
<!-- editor scrollbars -->
<div class="trk" style="left:775px;top:101px;width:16px;height:402px"></div>
<div class="btn" style="left:775px;top:101px;width:16px;height:16px"><div class="ar up" style="left:4px;top:5px;border-left-width:4px;border-right-width:4px"></div></div>
<div class="btn" style="left:775px;top:184px;width:16px;height:46px"></div>
<div class="btn" style="left:775px;top:487px;width:16px;height:16px"><div class="ar dn" style="left:4px;top:5px;border-left-width:4px;border-right-width:4px"></div></div>
<div class="a" style="left:248px;top:503px;width:543px;height:16px;background:#d4d0c8"></div>
<div class="trk" style="left:269px;top:503px;width:506px;height:16px"></div>
<div class="btn" style="left:269px;top:503px;width:16px;height:16px"><div class="ar" style="left:5px;top:4px;border-top:4px solid transparent;border-bottom:4px solid transparent;border-right:4px solid #000;border-left:0"></div></div>
<div class="btn" style="left:285px;top:503px;width:32px;height:16px"></div>
<div class="btn" style="left:759px;top:503px;width:16px;height:16px"><div class="ar" style="left:6px;top:4px;border-top:4px solid transparent;border-bottom:4px solid transparent;border-left:4px solid #000;border-right:0"></div></div>

<!-- popup -->
<div class="a" style="left:411px;top:213px;width:286px;height:197px;border:1px solid #000;background:#ffffee"></div>
<div class="a" style="left:412px;top:214px;width:284px;height:21px;background:#b5b39d;border-top:1px solid #e0dfd0;border-left:1px solid #e0dfd0;border-bottom:2px solid #55554a;border-right:1px solid #55554a"></div>
<div class="t" style="left:412px;top:218px;width:284px;text-align:center;font-style:italic;color:#000;font-size:12px">javax.naming.Context</div>
<div class="a" style="left:414px;top:288px;width:264px;height:17px;background:#000"></div>
<div class="trk" style="left:678px;top:237px;width:16px;height:170px"></div>
<div class="btn" style="left:678px;top:237px;width:16px;height:16px"><div class="ar up" style="left:4px;top:5px;border-left-width:4px;border-right-width:4px"></div></div>
<div class="btn" style="left:678px;top:317px;width:16px;height:25px"></div>
<div class="btn" style="left:678px;top:391px;width:16px;height:16px"><div class="ar dn" style="left:4px;top:5px;border-left-width:4px;border-right-width:4px"></div></div>
<svg class="ic" style="left:419px;top:236px" width="13" height="13"><path d="M5.5 1.5 L11.8 8 L8.3 11.6 L2 5.1Z" fill="#c000c0" stroke="#700070" stroke-width="0.8"/><path d="M3 5 L5.5 2.5" stroke="#f0a0f0"/></svg>
<div class="code" style="left:435px;top:239px;color:#000"><b>list</b><span style="margin-left:2px">(String)</span></div>
<div class="code" style="left:476px;width:200px;text-align:right;top:239px;color:#000">NamingEnumeration</div>
<svg class="ic" style="left:419px;top:253px" width="13" height="13"><path d="M5.5 1.5 L11.8 8 L8.3 11.6 L2 5.1Z" fill="#c000c0" stroke="#700070" stroke-width="0.8"/><path d="M3 5 L5.5 2.5" stroke="#f0a0f0"/></svg>
<div class="code" style="left:435px;top:256px;color:#000"><b>listBindings</b><span style="margin-left:2px">(...)</span></div>
<div class="code" style="left:476px;width:200px;text-align:right;top:256px;color:#000">NamingEnumeration</div>
<svg class="ic" style="left:419px;top:270px" width="13" height="13"><path d="M5.5 1.5 L11.8 8 L8.3 11.6 L2 5.1Z" fill="#c000c0" stroke="#700070" stroke-width="0.8"/><path d="M3 5 L5.5 2.5" stroke="#f0a0f0"/></svg>
<div class="code" style="left:435px;top:273px;color:#000"><b>listBindings</b><span style="margin-left:2px">(...)</span></div>
<div class="code" style="left:476px;width:200px;text-align:right;top:273px;color:#000">NamingEnumeration</div>
<svg class="ic" style="left:419px;top:287px" width="13" height="13"><path d="M5.5 1.5 L11.8 8 L8.3 11.6 L2 5.1Z" fill="#c000c0" stroke="#700070" stroke-width="0.8"/><path d="M3 5 L5.5 2.5" stroke="#f0a0f0"/></svg>
<div class="code" style="left:435px;top:290px;color:#fff"><b>lookup</b><span style="margin-left:2px">(Name)</span></div>
<div class="code" style="left:476px;width:200px;text-align:right;top:290px;color:#fff">Object</div>
<svg class="ic" style="left:419px;top:304px" width="13" height="13"><path d="M5.5 1.5 L11.8 8 L8.3 11.6 L2 5.1Z" fill="#c000c0" stroke="#700070" stroke-width="0.8"/><path d="M3 5 L5.5 2.5" stroke="#f0a0f0"/></svg>
<div class="code" style="left:435px;top:307px;color:#000"><b>lookup</b><span style="margin-left:2px">(String)</span></div>
<div class="code" style="left:476px;width:200px;text-align:right;top:307px;color:#000">Object</div>
<svg class="ic" style="left:419px;top:321px" width="13" height="13"><path d="M5.5 1.5 L11.8 8 L8.3 11.6 L2 5.1Z" fill="#c000c0" stroke="#700070" stroke-width="0.8"/><path d="M3 5 L5.5 2.5" stroke="#f0a0f0"/></svg>
<div class="code" style="left:435px;top:324px;color:#000"><b>lookupLink</b><span style="margin-left:2px">(Name)</span></div>
<div class="code" style="left:476px;width:200px;text-align:right;top:324px;color:#000">Object</div>
<svg class="ic" style="left:419px;top:338px" width="13" height="13"><path d="M5.5 1.5 L11.8 8 L8.3 11.6 L2 5.1Z" fill="#c000c0" stroke="#700070" stroke-width="0.8"/><path d="M3 5 L5.5 2.5" stroke="#f0a0f0"/></svg>
<div class="code" style="left:435px;top:341px;color:#000"><b>lookupLink</b><span style="margin-left:2px">(String)</span></div>
<div class="code" style="left:476px;width:200px;text-align:right;top:341px;color:#000">Object</div>
<svg class="ic" style="left:419px;top:355px" width="13" height="13"><path d="M5.5 1.5 L11.8 8 L8.3 11.6 L2 5.1Z" fill="#c000c0" stroke="#700070" stroke-width="0.8"/><path d="M3 5 L5.5 2.5" stroke="#f0a0f0"/></svg>
<div class="code" style="left:435px;top:358px">notify()</div>
<div class="code" style="left:476px;width:200px;text-align:right;top:358px;color:#000">void</div>
<svg class="ic" style="left:419px;top:372px" width="13" height="13"><path d="M5.5 1.5 L11.8 8 L8.3 11.6 L2 5.1Z" fill="#c000c0" stroke="#700070" stroke-width="0.8"/><path d="M3 5 L5.5 2.5" stroke="#f0a0f0"/></svg>
<div class="code" style="left:435px;top:375px">notifyAll()</div>
<div class="code" style="left:476px;width:200px;text-align:right;top:375px;color:#000">void</div>
<svg class="ic" style="left:420px;top:393px" width="11" height="11"><path d="M5.5 0.5 L10.5 5.5 L5.5 10.5 L0.5 5.5Z" fill="#8080e0" stroke="#303090"/></svg>
<div class="code" style="left:435px;top:392px"><b>OBJECT_FACTORIES</b></div>
<div class="code" style="left:476px;width:200px;text-align:right;top:392px;color:#000">String</div>
<!-- editor status -->
<div class="a" style="left:247px;top:522px;width:335px;height:16px;border-top:1px solid #808080;border-left:1px solid #808080;border-right:1px solid #fff;border-bottom:1px solid #fff"></div>
<div class="t" style="left:247px;top:522px">CartBean.java</div>
<div class="a" style="left:583px;top:522px;width:69px;height:16px;border-top:1px solid #808080;border-left:1px solid #808080;border-right:1px solid #fff;border-bottom:1px solid #fff"></div>
<div class="t" style="left:583px;top:522px;width:76px;text-align:center">38:30</div>
<div class="a" style="left:654px;top:522px;width:73px;height:16px;border-top:1px solid #808080;border-left:1px solid #808080;border-right:1px solid #fff;border-bottom:1px solid #fff"></div>
<div class="t" style="left:654px;top:522px;width:73px;text-align:center"><span class="j">変</span><span class="j">更</span><span class="j">あ</span><span class="j">り</span></div>
<div class="a" style="left:728px;top:522px;width:65px;height:16px;border-top:1px solid #808080;border-left:1px solid #808080;border-right:1px solid #fff;border-bottom:1px solid #fff"></div>
<div class="t" style="left:728px;top:522px;width:63px;text-align:center"><span class="j">挿</span><span class="j">入</span></div>

<!-- bottom tabs -->
<div class="a" style="left:294px;top:541px;width:499px;height:2px;border-top:1px solid #808080;border-bottom:1px solid #404040"></div>
<div class="a" style="left:294px;top:542px;width:34px;height:21px;border-left:1px solid #fff;border-right:1px solid #404040;border-bottom:1px solid #404040;box-shadow:inset -1px -1px 0 #808080"></div>
<div class="t" style="left:298px;top:545px"><span class="j">設</span><span class="j">計</span></div>
<div class="a" style="left:328px;top:542px;width:39px;height:21px;border-left:1px solid #fff;border-right:1px solid #404040;border-bottom:1px solid #404040;box-shadow:inset -1px -1px 0 #808080"></div>
<div class="t" style="left:333px;top:545px">Bean</div>
<div class="a" style="left:368px;top:542px;width:36px;height:21px;border-left:1px solid #fff;border-right:1px solid #404040;border-bottom:1px solid #404040;box-shadow:inset -1px -1px 0 #808080"></div>
<div class="t" style="left:372px;top:545px">UML</div>
<div class="a" style="left:404px;top:542px;width:35px;height:21px;border-left:1px solid #fff;border-right:1px solid #404040;border-bottom:1px solid #404040;box-shadow:inset -1px -1px 0 #808080"></div>
<div class="t" style="left:408px;top:545px"><span class="j">文</span><span class="j">書</span></div>
<div class="a" style="left:439px;top:542px;width:35px;height:21px;border-left:1px solid #fff;border-right:1px solid #404040;border-bottom:1px solid #404040;box-shadow:inset -1px -1px 0 #808080"></div>
<div class="t" style="left:443px;top:545px"><span class="j">履</span><span class="j">歴</span></div>
<div class="a" style="left:246px;top:539px;width:48px;height:25px;background:#d4d0c8;border-left:1px solid #fff;border-right:1px solid #404040;border-bottom:1px solid #404040;box-shadow:inset -1px -1px 0 #808080"></div>
<div class="t" style="left:251px;top:547px"><span class="j">ソ</span><span class="j">ー</span><span class="j">ス</span></div>

<!-- status bar -->
<div class="a" style="left:4px;top:567px;width:791px;height:19px;border-top:1px solid #808080;border-left:1px solid #808080;border-right:1px solid #fff;border-bottom:1px solid #fff"></div>
</body></html>
